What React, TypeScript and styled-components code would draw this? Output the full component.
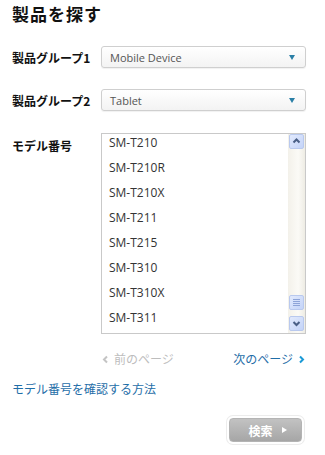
import React from 'react';
import styled, { createGlobalStyle } from 'styled-components';

const GlobalStyle = createGlobalStyle`
  body {
    margin: 0;
    background: #ffffff;
    font-family: 'Open Sans', 'Noto Sans CJK JP', sans-serif;
  }
`;

const jp = `'Noto Sans CJK JP', 'Noto Sans', sans-serif`;
const latin = `'Open Sans', 'Noto Sans CJK JP', sans-serif`;

const Panel = styled.div`
  width: 325px;
  height: 455px;
  box-sizing: border-box;
  padding: 4px 12px 0;
  display: flex;
  flex-direction: column;
`;

const Title = styled.h1`
  margin: 0;
  font-family: ${jp};
  font-size: 17px;
  line-height: 20px;
  font-weight: 700;
  color: #111;
  letter-spacing: 1px;
`;

const Field = styled.div<{ $top: number; $alignTop?: boolean }>`
  display: grid;
  grid-template-columns: 89px 205px;
  align-items: ${(p) => (p.$alignTop ? 'start' : 'center')};
  margin-top: ${(p) => p.$top}px;
`;

const Label = styled.label<{ $pad?: number }>`
  font-family: ${jp};
  font-size: 12px;
  font-weight: 700;
  color: #111;
  white-space: nowrap;
  padding-top: ${(p) => p.$pad || 0}px;
`;

const Select = styled.div`
  height: 22px;
  box-sizing: border-box;
  border: 1px solid #cfcfcf;
  border-radius: 3px;
  background: linear-gradient(#ffffff, #f3f3f3);
  box-shadow: 0 1px 1px rgba(0, 0, 0, 0.06);
  display: flex;
  align-items: center;
  justify-content: space-between;
  padding: 0 10px 0 8px;
  font-family: ${latin};
  font-size: 11px;
  color: #555;
`;

const Caret = styled.span`
  width: 0;
  height: 0;
  border-left: 3px solid transparent;
  border-right: 3px solid transparent;
  border-top: 5px solid #2a7fa6;
`;

const ListBox = styled.div`
  height: 201px;
  box-sizing: border-box;
  border: 1px solid #c9c9c9;
  display: flex;
  overflow: hidden;
  background: #fff;
`;

const Items = styled.ul`
  flex: 1;
  list-style: none;
  margin: -4px 0 0;
  padding: 0;
`;

const Item = styled.li`
  height: 25px;
  line-height: 25px;
  padding-left: 7px;
  font-family: ${latin};
  font-size: 12px;
  color: #333;
`;

const Track = styled.div`
  width: 17px;
  background: linear-gradient(90deg, #f3f1ea, #fbfaf6 60%, #eeece4);
  display: flex;
  flex-direction: column;
  align-items: center;
  padding: 0 0 2px;
  box-sizing: border-box;
`;

const ScrollButton = styled.div`
  width: 15px;
  height: 15px;
  box-sizing: border-box;
  border: 1px solid #b9c9ee;
  border-radius: 2px;
  background: linear-gradient(135deg, #e2eafd, #c3d3f8);
  display: flex;
  align-items: center;
  justify-content: center;
`;

const Thumb = styled(ScrollButton)`
  margin-top: auto;
  margin-bottom: 6px;
  flex-direction: column;
  gap: 1px;
`;

const Grip = styled.span`
  width: 7px;
  height: 1px;
  background: #8ea4d8;
`;

const Pager = styled.div`
  display: grid;
  grid-template-columns: 89px 205px;
  margin-top: 17px;
  font-family: ${jp};
  font-size: 12px;
  line-height: 16px;
`;

const PagerLinks = styled.div`
  display: flex;
  justify-content: space-between;
`;

const PageLink = styled.a<{ $disabled?: boolean }>`
  display: flex;
  align-items: center;
  gap: 4px;
  color: ${(p) => (p.$disabled ? '#bdbdbd' : '#1f6ea8')};
  text-decoration: none;
  svg {
    display: block;
  }
`;

const HelpLink = styled.a`
  margin-top: 14px;
  font-family: ${jp};
  font-size: 12px;
  line-height: 16px;
  color: #1f6ea8;
  text-decoration: none;
`;

const Actions = styled.div`
  display: flex;
  justify-content: flex-end;
  margin-top: 21px;
  padding-right: 11px;
`;

const SearchButton = styled.button`
  width: 73px;
  height: 24px;
  border: 1px solid #b4b4b4;
  border-radius: 4px;
  background: linear-gradient(#c2c2c2, #a6a6a6);
  box-shadow: 0 0 0 2px #fff, 0 0 0 3px #ececec;
  color: #fff;
  font-family: ${jp};
  font-size: 12px;
  font-weight: 700;
  display: flex;
  align-items: center;
  justify-content: center;
  gap: 9px;
  padding: 0 0 0 4px;
`;

const Play = styled.span`
  width: 0;
  height: 0;
  border-top: 3px solid transparent;
  border-bottom: 3px solid transparent;
  border-left: 5px solid #fff;
`;

const Chevron = ({ dir, color }: { dir: 'up' | 'down' | 'left' | 'right'; color: string }) => {
  const paths: Record<string, string> = {
    up: 'M1.5 5.5 L4.5 2.5 L7.5 5.5',
    down: 'M1.5 3 L4.5 6 L7.5 3',
    left: 'M6 1.5 L3 4.5 L6 7.5',
    right: 'M3 1.5 L6 4.5 L3 7.5',
  };
  return (
    <svg width="9" height="9" viewBox="0 0 9 9">
      <path d={paths[dir]} fill="none" stroke={color} strokeWidth="2" />
    </svg>
  );
};

const models = ['SM-T210', 'SM-T210R', 'SM-T210X', 'SM-T211', 'SM-T215', 'SM-T310', 'SM-T310X', 'SM-T311'];

export default function App() {
  return (
    <>
      <GlobalStyle />
      <Panel>
        <Title>製品を探す</Title>

        <Field $top={22}>
          <Label>製品グループ1</Label>
          <Select>
            Mobile Device
            <Caret />
          </Select>
        </Field>

        <Field $top={21}>
          <Label>製品グループ2</Label>
          <Select>
            Tablet
            <Caret />
          </Select>
        </Field>

        <Field $top={22} $alignTop>
          <Label $pad={4}>モデル番号</Label>
          <ListBox>
            <Items>
              {models.map((m) => (
                <Item key={m}>{m}</Item>
              ))}
            </Items>
            <Track>
              <ScrollButton>
                <Chevron dir="up" color="#4a5f86" />
              </ScrollButton>
              <Thumb>
                <Grip />
                <Grip />
                <Grip />
                <Grip />
              </Thumb>
              <ScrollButton>
                <Chevron dir="down" color="#4a5f86" />
              </ScrollButton>
            </Track>
          </ListBox>
        </Field>

        <Pager>
          <span />
          <PagerLinks>
            <PageLink $disabled>
              <Chevron dir="left" color="#c4c4c4" />
              前のページ
            </PageLink>
            <PageLink href="#">
              次のページ
              <Chevron dir="right" color="#1b9ad6" />
            </PageLink>
          </PagerLinks>
        </Pager>

        <HelpLink href="#">モデル番号を確認する方法</HelpLink>

        <Actions>
          <SearchButton>
            検索
            <Play />
          </SearchButton>
        </Actions>
      </Panel>
    </>
  );
}
